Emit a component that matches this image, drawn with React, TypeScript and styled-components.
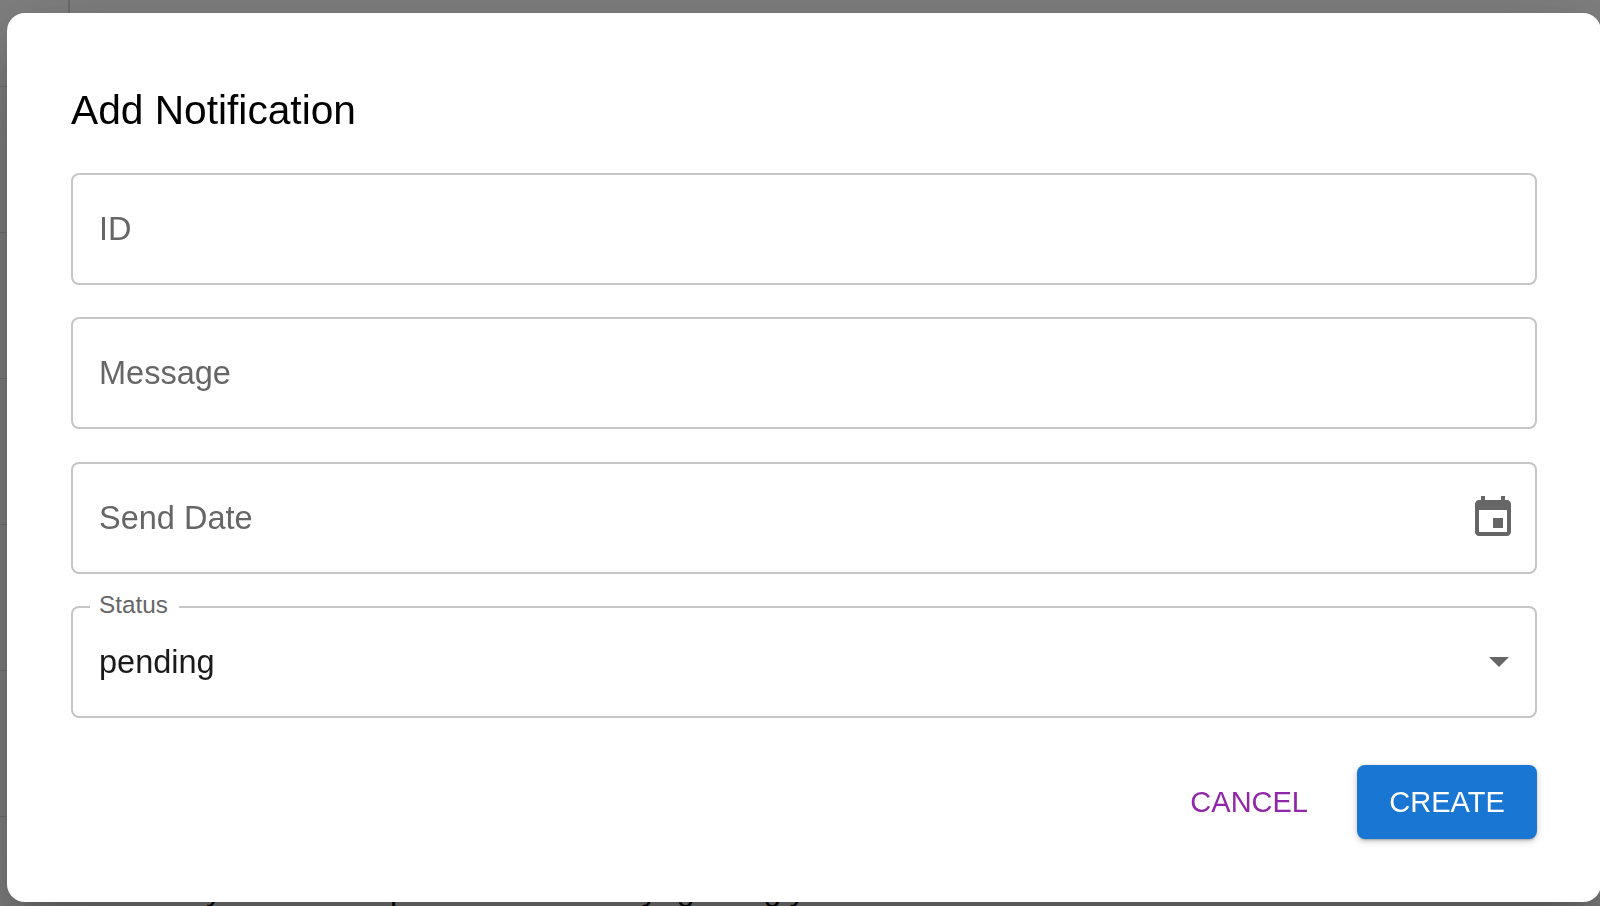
import React from "react";
import styled, { createGlobalStyle } from "styled-components";

const GlobalStyle = createGlobalStyle`
  html, body {
    margin: 0;
    height: 906px;
    overflow: hidden;
    background: #fff;
    font-family: "Liberation Sans", Arial, sans-serif;
  }
`;

const Page = styled.div`
  height: 906px;
  overflow: hidden;
`;

const HeadRow = styled.div`
  height: 86px;
  border-bottom: 1px solid #e0e0e0;
`;

const HeadCell = styled.div`
  height: 100%;
  margin-left: 68px;
  border-left: 2px solid #d8d8d8;
`;

const TableRow = styled.div`
  height: 145px;
  border-bottom: 1px solid #e0e0e0;
`;

const NoteLine = styled.div`
  display: flex;
  height: 40px;
  margin-top: 52px;
  padding-left: 206px;
  font-size: 32px;
  line-height: 40px;
  color: #000;
`;

const Tail = styled.span<{ $gap: number }>`
  margin-left: ${(p) => p.$gap}px;
`;

const Backdrop = styled.div`
  position: fixed;
  inset: 0;
  background: rgba(0, 0, 0, 0.5);
  padding: 13px 0 4px 7px;
  box-sizing: border-box;
  display: flex;
`;

const Dialog = styled.div`
  width: 1594px;
  flex-shrink: 0;
  box-sizing: border-box;
  background: #fff;
  border-radius: 18px;
  padding: 0 64px;
  box-shadow: 0 22px 30px -14px rgba(0, 0, 0, 0.2),
    0 48px 76px 6px rgba(0, 0, 0, 0.14), 0 18px 92px 16px rgba(0, 0, 0, 0.12);
`;

const Title = styled.h2`
  margin: 0;
  height: 160.2px;
  padding-top: 71px;
  box-sizing: border-box;
  font-size: 40.7px;
  line-height: 52px;
  font-weight: 400;
  color: #000;
`;

const Fields = styled.div`
  display: flex;
  flex-direction: column;
  gap: 32.2px;
`;

const Field = styled.div`
  position: relative;
  height: 112px;
  box-sizing: border-box;
  border: 2px solid #c6c6c6;
  border-radius: 8px;
  padding: 1px 12px 0 26px;
  display: flex;
  align-items: center;
  justify-content: space-between;
  font-size: 32.5px;
`;

const Placeholder = styled.span`
  color: #666;
`;

const Value = styled.span`
  color: #1a1a1a;
`;

const FloatLabel = styled.label`
  position: absolute;
  left: 17px;
  top: -17px;
  padding: 0 11px 0 9px;
  background: #fff;
  font-size: 24.3px;
  line-height: 28px;
  color: #666;
`;

const Icon = styled.svg<{ $nudge?: number }>`
  width: 48px;
  height: 48px;
  fill: #666;
  flex-shrink: 0;
  margin-right: ${(p) => p.$nudge ?? 0}px;
`;

const Actions = styled.div`
  display: flex;
  justify-content: flex-end;
  align-items: center;
  gap: 33px;
  margin-top: 47.3px;
`;

const TextButton = styled.button`
  border: 0;
  background: none;
  padding: 2px 16px 0;
  height: 73.5px;
  font-family: inherit;
  font-size: 29px;
  color: #9027a8;
  cursor: pointer;
`;

const PrimaryButton = styled.button`
  border: 0;
  width: 180px;
  height: 73.5px;
  padding: 2px 0 0;
  border-radius: 8px;
  background: #1976d2;
  color: #fff;
  font-family: inherit;
  font-size: 29px;
  cursor: pointer;
  box-shadow: 0 3px 2px -2px rgba(0, 0, 0, 0.2), 0 2px 4px 0 rgba(0, 0, 0, 0.14),
    0 2px 10px 0 rgba(0, 0, 0, 0.12);
`;

const App: React.FC = () => {
  return (
    <>
      <GlobalStyle />
      <Page>
        <HeadRow>
          <HeadCell />
        </HeadRow>
        {[0, 1, 2, 3, 4].map((n) => (
          <TableRow key={n} />
        ))}
        <NoteLine>
          <Tail $gap={0}>y</Tail>
          <Tail $gap={168}>p</Tail>
          <Tail $gap={234}>y</Tail>
          <Tail $gap={19}>g</Tail>
          <Tail $gap={69}>g</Tail>
          <Tail $gap={8}>y</Tail>
        </NoteLine>
      </Page>
      <Backdrop>
        <Dialog role="dialog">
          <Title>Add Notification</Title>
          <Fields>
            <Field>
              <Placeholder>ID</Placeholder>
            </Field>
            <Field>
              <Placeholder>Message</Placeholder>
            </Field>
            <Field>
              <Placeholder>Send Date</Placeholder>
              <Icon $nudge={6} viewBox="0 0 24 24">
                <path d="M17 12h-5v5h5v-5zM16 1v2H8V1H6v2H5c-1.11 0-1.99.9-1.99 2L3 19c0 1.1.89 2 2 2h14c1.1 0 2-.9 2-2V5c0-1.1-.9-2-2-2h-1V1h-2zm3 18H5V8h14v11z" />
              </Icon>
            </Field>
            <Field>
              <FloatLabel>Status</FloatLabel>
              <Value>pending</Value>
              <Icon viewBox="0 0 24 24">
                <path d="M7 9.5l5 5 5-5z" />
              </Icon>
            </Field>
          </Fields>
          <Actions>
            <TextButton>CANCEL</TextButton>
            <PrimaryButton>CREATE</PrimaryButton>
          </Actions>
        </Dialog>
      </Backdrop>
    </>
  );
};

export default App;
